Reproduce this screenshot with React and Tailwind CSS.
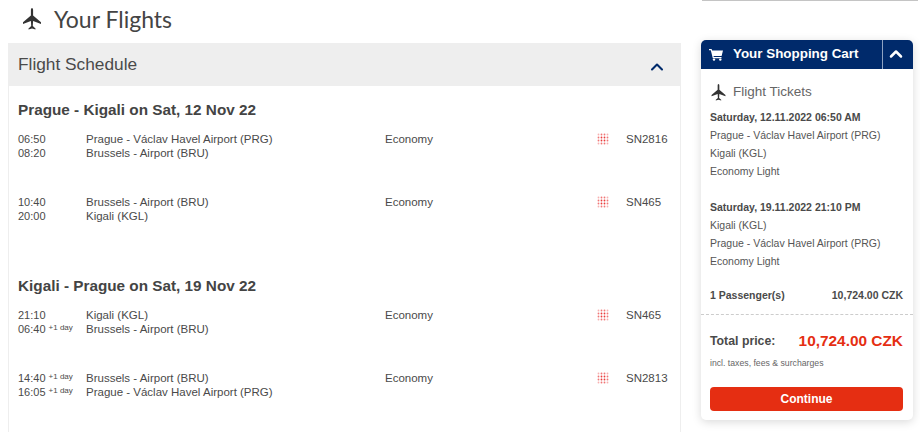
import { ChevronUp } from 'lucide-react';

const sans = "font-['Liberation_Sans',Arial,sans-serif]";

const Plane = ({ className }) => (
  <svg viewBox="0 0 18 22" className={className} fill="currentColor">
    <path d="M9 0c-.7 0-1.100 1-1.100 2.200v5.300L0 14.300v1.600l7.900-3 .3 5.200-2.700 2.300v1l3.500-1 3.500 1v-1l-2.700-2.300.3-5.200 7.900 3v-1.600l-7.900-6.800V2.200C10.100 1 9.700 0 9 0z" />
  </svg>
);

const Cart = () => (
  <svg width="14" height="13" viewBox="0 0 14 13" fill="white" className="mr-[10px] shrink-0">
    <path d="M0 1h2.600l.5 1.500H14l-1.400 5.500H4.500l.3 1H12.500v1.200H3.800L1.800 2.200H0z" />
    <circle cx="5" cy="11.600" r="1.200" />
    <circle cx="11.300" cy="11.600" r="1.200" />
  </svg>
);

// small red dot grid next to flight number, outer dots fade out
const Carrier = () => (
  <svg width="12" height="12" viewBox="0 0 12 12" fill="#ea3a3a">
    {[1.5, 4.500, 7.500, 10.500].map((y) =>
      [1.5, 4.500, 7.500, 10.500].map((x) => {
        const outer = (x === 1.5 || x === 10.5 ? 1 : 0) + (y === 1.5 || y === 10.5 ? 1 : 0);
        return <circle key={`${x}-${y}`} cx={x} cy={y} r={0.9} opacity={outer === 2 ? 0.4 : outer === 1 ? 0.7 : 1} />;
      })
    )}
  </svg>
);

const Day = () => <span className="text-[8px] leading-none ml-[3px] align-[3px]">+1 day</span>;

const Row = ({ t1, t2, a1, a2, no, d1, d2 }) => (
  <div className="flex h-[63px] text-[11.5px] leading-[14px] text-[#4a4a4a]">
    <div className="w-[68px] text-[11px]">
      <div className="whitespace-nowrap h-[14px]">{t1}{d1 && <Day />}</div>
      <div className="whitespace-nowrap h-[14px]">{t2}{d2 && <Day />}</div>
    </div>
    <div className="w-[299px]">
      <div>{a1}</div>
      <div>{a2}</div>
    </div>
    <div className="w-[212px]">Economy</div>
    <div className="w-[29px] pt-[1px]"><Carrier /></div>
    <div>{no}</div>
  </div>
);

const Leg = ({ title, rows }) => (
  <div>
    <h3 className="text-[15.3px] font-bold leading-[20px] text-[#444] mb-[12px]">{title}</h3>
    {rows.map((r) => <Row key={r.no + r.t1} {...r} />)}
  </div>
);

const CartLeg = ({ date, lines }) => (
  <div>
    <div className="font-bold text-[#4a4a4a] leading-[18px]">{date}</div>
    {lines.map((l) => <div key={l} className="leading-[18px]">{l}</div>)}
  </div>
);

export default function App() {
  return (
    <div className={`${sans} w-[920px] h-[432px] overflow-hidden bg-white flex`}>
      <div className="w-[701px] pl-2 pr-5 shrink-0">
        <div className="h-[43px] flex items-center pl-[15px] text-[#444]">
          <Plane className="w-[18px] h-[22px] text-[#333] mr-[13px] mt-[-5px]" />
          <h1 className="font-['Lato',sans-serif] text-[23px] leading-none mt-[-5px]">Your Flights</h1>
        </div>
        <div className="border-x border-[#eeeeee] h-[389px]">
          <div className="h-[43px] bg-[#eeeeee] flex items-center justify-between pl-[9px] pr-[14px] mx-[-1px]">
            <span className="text-[17.300px] text-[#4a4a4a] pl-[1px]">Flight Schedule</span>
            <ChevronUp className="w-[20px] h-[20px] text-[#002a6b] mt-[5px]" strokeWidth={2.5} />
          </div>
          <div className="pl-[9px] pt-[14px]">
            <Leg
              title="Prague - Kigali on Sat, 12 Nov 22"
              rows={[
                { t1: '06:50', t2: '08:20', a1: 'Prague - Václav Havel Airport (PRG)', a2: 'Brussels - Airport (BRU)', no: 'SN2816' },
                { t1: '10:40', t2: '20:00', a1: 'Brussels - Airport (BRU)', a2: 'Kigali (KGL)', no: 'SN465' },
              ]}
            />
            <div className="h-[18px]" />
            <Leg
              title="Kigali - Prague on Sat, 19 Nov 22"
              rows={[
                { t1: '21:10', t2: '06:40', d2: true, a1: 'Kigali (KGL)', a2: 'Brussels - Airport (BRU)', no: 'SN465' },
                { t1: '14:40', t2: '16:05', d1: true, d2: true, a1: 'Brussels - Airport (BRU)', a2: 'Prague - Václav Havel Airport (PRG)', no: 'SN2813' },
              ]}
            />
          </div>
        </div>
      </div>

      <div className="w-[212px] shrink-0 relative">
        <div className="absolute top-0 left-[1px] w-[216px] h-px bg-[#c4c4c4]" />
        <div className="mt-[40px] h-[380px] rounded-[5px] bg-white shadow-[0_2px_10px_rgba(0,0,0,0.15)] overflow-hidden">
          <div className="h-[29px] bg-[#002a6b] flex text-white">
            <div className="w-[182px] flex items-center pl-[8px] border-r border-[#8fa3c2]">
              <Cart />
              <span className="text-[13.400px] font-bold">Your Shopping Cart</span>
            </div>
            <div className="flex-1 flex items-center justify-center pr-[4px]">
              <ChevronUp className="w-[20px] h-[20px] mb-[2px]" strokeWidth={3} />
            </div>
          </div>
          <div className="pl-[9px] pr-[10px] text-[10.5px] text-[#555]">
            <div className="flex items-center h-[39px] pt-[7px]">
              <Plane className="w-[15px] h-[17px] text-[#333] mr-[7px] ml-[1px]" />
              <span className="text-[13.500px] text-[#666]">Flight Tickets</span>
            </div>
            <div className="flex flex-col gap-[18px]">
              <CartLeg date="Saturday, 12.11.2022 06:50 AM" lines={['Prague - Václav Havel Airport (PRG)', 'Kigali (KGL)', 'Economy Light']} />
              <CartLeg date="Saturday, 19.11.2022 21:10 PM" lines={['Kigali (KGL)', 'Prague - Václav Havel Airport (PRG)', 'Economy Light']} />
            </div>
            <div className="flex justify-between font-bold text-[#4a4a4a] mt-[16px] leading-[18px]">
              <span>1 Passenger(s)</span>
              <span>10,724.00 CZK</span>
            </div>
          </div>
          <div className="border-t border-dashed border-[#cccccc] mt-[10px] pl-[9px] pr-[10px] pt-[16px]">
            <div className="flex justify-between items-center h-[20px]">
              <span className="text-[12.300px] font-bold text-[#4a4a4a]">Total price:</span>
              <span className="text-[15.400px] font-bold text-[#e52e12]">10,724.00 CZK</span>
            </div>
            <div className="text-[8.700px] text-[#666] mt-[6px] leading-[12px]">incl. taxes, fees &amp; surcharges</div>
            <button className="mt-[18px] w-full h-[24px] rounded-[4px] bg-[#e52e12] text-white text-xs font-bold">Continue</button>
          </div>
        </div>
      </div>
    </div>
  );
}
